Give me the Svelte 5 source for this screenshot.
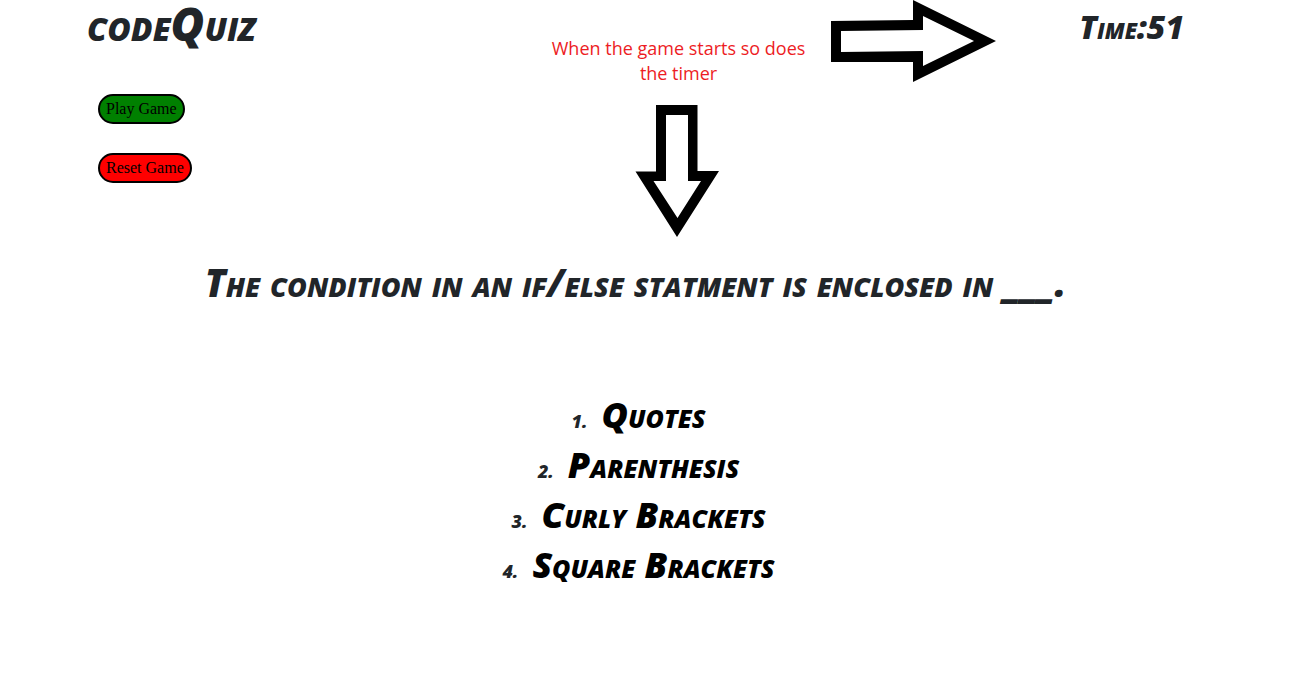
<script>
  const question = 'The condition in an if/else statment is enclosed in ___.';
  const answers = ['Quotes', 'Parenthesis', 'Curly Brackets', 'Square Brackets'];
  let seconds = $state(51);
</script>

<div class="page">
  <header>
    <div class="side">
      <h1>codeQuiz</h1>
      <button class="pill play" type="button">Play Game</button>
      <button class="pill reset" type="button">Reset Game</button>
    </div>
    <div class="note">
      <p>When the game starts so does the timer</p>
      <svg width="84" height="133" viewBox="0 0 84 133" aria-hidden="true">
        <path fill-rule="evenodd" d="M21 1H62.500V67H84L42 133L0.500 67.500H21ZM31 11V77H18.500L42.500 114L66 77H53V11Z" />
      </svg>
    </div>
    <svg class="right" width="165" height="82" viewBox="0 0 165 82" aria-hidden="true">
      <path fill-rule="evenodd" d="M0 21L82 20V0L165 41L82 82V62H0ZM10 31V52L92 51V66L143 41L92 16V30Z" />
    </svg>
    <p class="time">Time:<span>{seconds}</span></p>
  </header>

  <main>
    <h2>{question}</h2>
    <ol>
      {#each answers as answer, i}
        <li><span class="number">{i + 1}.</span><button class="answer" type="button">{answer}</button></li>
      {/each}
    </ol>
  </main>
</div>

<style>
  :global(body) {
    margin: 0;
    background: #fff;
    color: #212529;
  }
  .page {
    font-family: "Permanent Marker", "Open Sans", sans-serif;
    font-style: italic;
    font-weight: 800;
    font-variant-caps: small-caps;
  }
  h1, h2, p, ol {
    margin: 0;
    padding: 0;
  }
  header {
    display: grid;
    grid-template-columns: 13fr 256px 188px 7fr;
    align-items: start;
  }
  .side {
    display: flex;
    flex-direction: column;
    align-items: flex-start;
    padding-left: 87px;
  }
  h1 {
    font-size: 46px;
    line-height: 46px;
    font-weight: 800;
    margin-bottom: 48px;
  }
  .pill {
    box-sizing: border-box;
    height: 30px;
    margin: 0 0 29px 11px;
    padding: 0 6px;
    border: 2px solid #000;
    border-radius: 15px;
    color: #000;
    font: 16px "Liberation Serif", serif;
  }
  .play {
    background: #008000;
  }
  .reset {
    background: #f00;
  }
  .note {
    display: flex;
    flex-direction: column;
    align-items: center;
    padding-top: 36px;
    gap: 18px;
  }
  .note p {
    color: #ed1c24;
    font: 18px/25px "Open Sans", sans-serif;
    text-align: center;
  }
  .note svg {
    margin-right: 4px;
  }
  .right {
    margin-left: 24px;
  }
  .time {
    justify-self: end;
    padding-right: 107px;
    font-size: 32px;
    line-height: 54px;
  }
  main {
    padding: 20px 20px 0 0;
    text-align: center;
  }
  h2 {
    font-size: 38px;
    line-height: 50px;
    font-weight: 800;
  }
  ol {
    margin-top: 83px;
    list-style: none;
  }
  li {
    display: flex;
    align-items: baseline;
    justify-content: center;
    gap: 14px;
    padding-left: 6px;
  }
  .number {
    font-size: 18px;
    line-height: 20px;
  }
  .answer {
    padding: 0;
    border: 0;
    background: none;
    color: #000;
    font: inherit;
    font-variant-caps: small-caps;
    font-size: 36px;
    line-height: 50px;
  }
</style>
